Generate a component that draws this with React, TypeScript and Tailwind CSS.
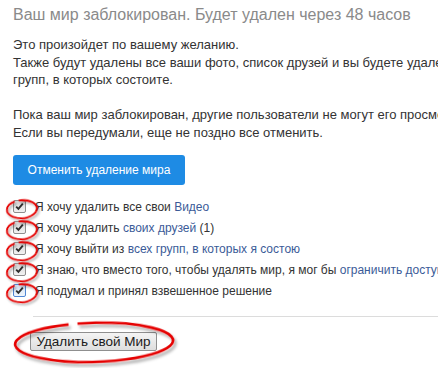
const LINK = 'text-[#3b5b98]'

function Check({ focused }: { focused?: boolean }) {
  return (
    <span className="relative inline-flex h-[13px] w-[13px] shrink-0">
      <span
        className={`flex h-[13px] w-[13px] items-center justify-center rounded-[2px] border ${
          focused
            ? 'border-[#4f86d3] bg-gradient-to-b from-[#d4e2f4] to-[#eef4fb]'
            : 'border-[#8e8e8e] bg-gradient-to-b from-[#d6d6d6] to-[#f2f2f2]'
        }`}
      >
        <svg width="9" height="9" viewBox="0 0 9 9">
          <path d="M1.2 4.6 L3.4 6.8 L7.8 1.6" fill="none" stroke="#2d2d2d" strokeWidth="1.9" />
        </svg>
      </span>
      {/* red hand-drawn mark */}
      <svg
        className="pointer-events-none absolute left-[-9px] top-[-6px] overflow-visible"
        width="34"
        height="24"
        viewBox="0 0 34 24"
      >
        <defs>
          <filter id="sh" x="-30%" y="-30%" width="160%" height="160%">
            <feDropShadow dx="1.5" dy="2" stdDeviation="1.2" floodColor="#000" floodOpacity="0.35" />
          </filter>
        </defs>
        <path
          d="M13 3.4 A15 9 0 1 1 9 4.2"
          fill="none"
          stroke="#e50000"
          strokeWidth="1.8"
          filter="url(#sh)"
          transform="translate(2 3) rotate(-4 15 9)"
        />
      </svg>
    </span>
  )
}

function Row({ children, focused }: { children: React.ReactNode; focused?: boolean }) {
  return (
    <div className="flex h-[21px] items-center gap-[9px] text-[12px]">
      <Check focused={focused} />
      <span>{children}</span>
    </div>
  )
}

export default function App() {
  return (
    <div className="h-[368px] w-[438px] overflow-hidden bg-white font-['Liberation_Sans',Arial,sans-serif] text-[13px] text-[#333]">
      <div className="w-[600px] whitespace-nowrap px-[13px] pt-[4px]">
        <h1 className="text-[16px] leading-[22px] text-[#8a8a8a]">
          Ваш мир заблокирован. Будет удален через 48 часов
        </h1>

        <p className="mt-[10px] leading-[17.5px]">
          Это произойдет по вашему желанию.
          <br />
          Также будут удалены все ваши фото, список друзей и вы будете удалены из всех
          <br />
          групп, в которых состоите.
          <br />
          <br />
          Пока ваш мир заблокирован, другие пользователи не могут его просмотреть.
          <br />
          Если вы передумали, еще не поздно все отменить.
        </p>

        <button className="mt-[14px] flex h-[30px] w-[172px] items-center justify-center rounded-[3px] bg-[#1e8be4] text-[12px] text-white">
          Отменить удаление мира
        </button>

        <div className="mt-[11px] flex flex-col">
          <Row>
            Я хочу удалить все свои <span className={LINK}>Видео</span>
          </Row>
          <Row>
            Я хочу удалить <span className={LINK}>своих друзей</span> (1)
          </Row>
          <Row>
            Я хочу выйти из <span className={LINK}>всех групп, в которых я состою</span>
          </Row>
          <Row>
            Я знаю, что вместо того, чтобы удалять мир, я мог бы{' '}
            <span className={LINK}>ограничить доступ к нему</span>
          </Row>
          <Row focused>Я подумал и принял взвешенное решение</Row>
        </div>

        <div className="ml-[20px] mt-[15px] border-t border-[#dcdcdc]" />

        <div className="ml-[17px] mt-[15px] flex">
          <span className="relative inline-flex">
            <button className="h-[19px] w-[127px] rounded-[2px] border border-[#8f8f8f] bg-gradient-to-b from-[#f4f4f4] to-[#dedede] text-[13.5px] leading-[17px] text-[#1a1a1a]">
              Удалить свой Мир
            </button>
            <svg
              className="pointer-events-none absolute left-[-17px] top-[-11px] overflow-visible"
              width="165"
              height="44"
              viewBox="0 0 165 44"
            >
              <defs>
                <filter id="shb" x="-10%" y="-40%" width="120%" height="180%">
                  <feDropShadow dx="2" dy="3" stdDeviation="1.8" floodColor="#000" floodOpacity="0.35" />
                </filter>
              </defs>
              <path
                d="M65 2.3 A79 19.5 0 1 1 56 2.9"
                fill="none"
                stroke="#e50000"
                strokeWidth="2.6"
                filter="url(#shb)"
                transform="rotate(-1.5 80 21)"
              />
            </svg>
          </span>
        </div>
      </div>
    </div>
  )
}
